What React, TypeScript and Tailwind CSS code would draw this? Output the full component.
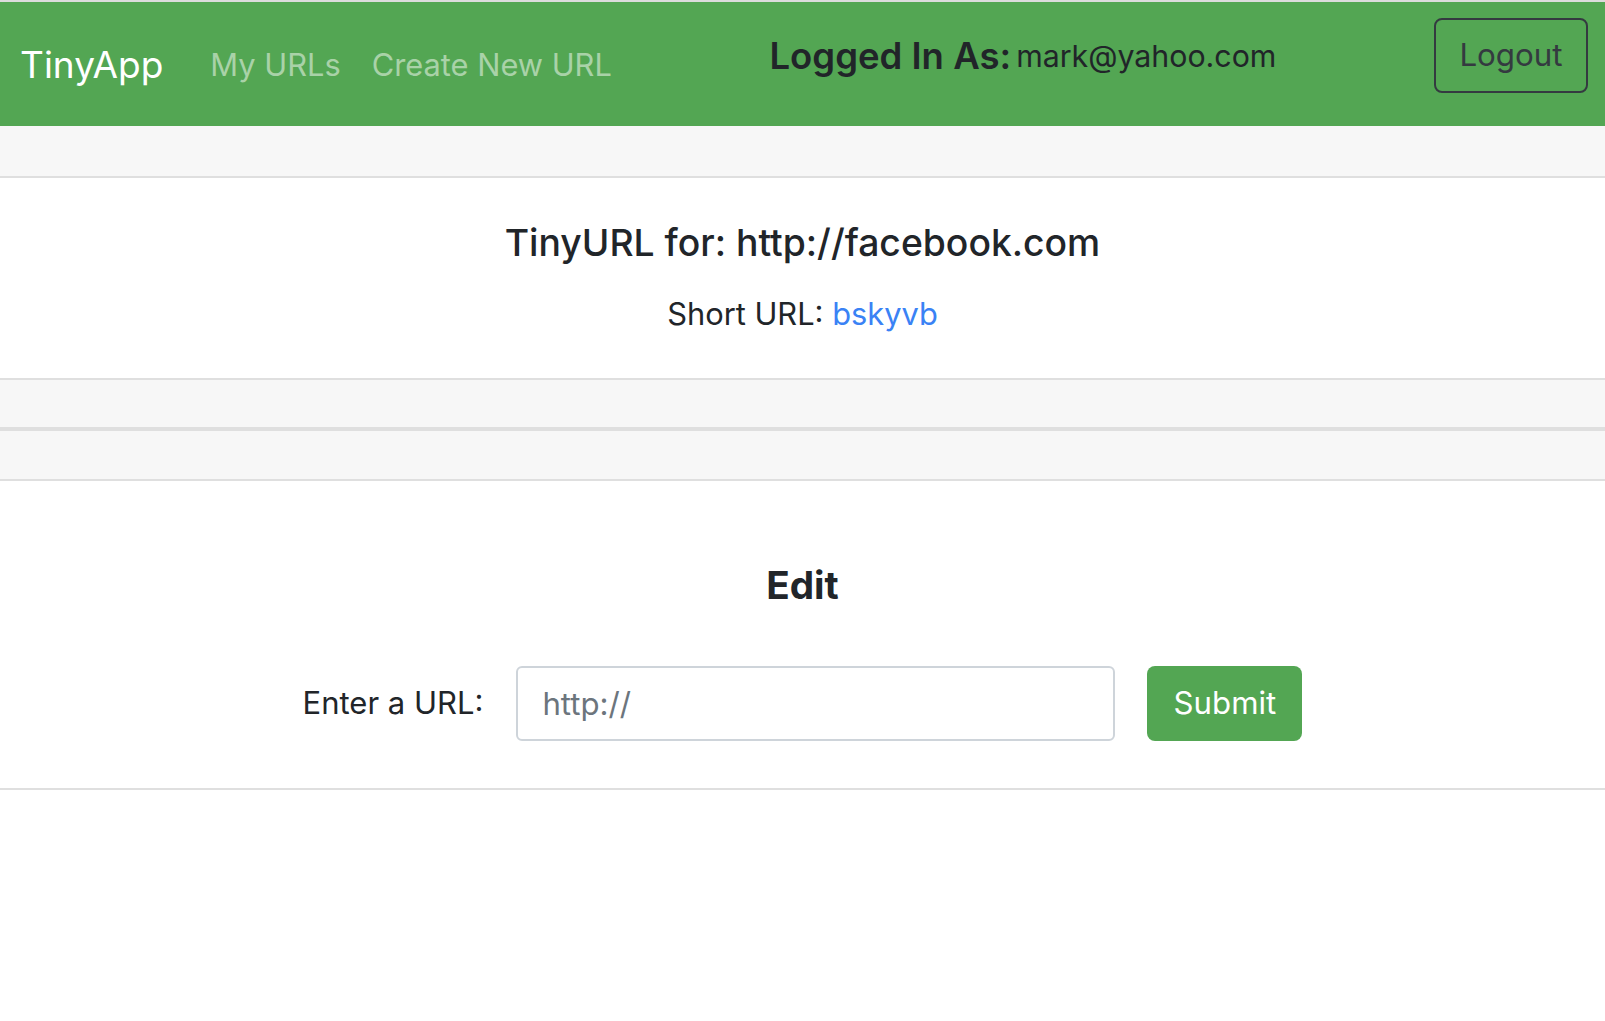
import React from "react";

export default function App() {
  return (
    <div className="min-h-screen bg-white" style={{ fontFamily: "Inter, 'Liberation Sans', sans-serif" }}>
      <nav className="flex h-[126px] items-center border-t-2 border-[#dcdcdc] bg-[#53a653] pl-[20px] pr-[17px]">
        <span className="text-[37px] leading-none text-white">TinyApp</span>
        <div className="ml-[47px] flex items-center gap-[31px] pt-[2px]">
          <span className="text-[30.8px] leading-none text-[#a9d2a8]">My URLs</span>
          <span className="text-[30.8px] leading-none text-[#a9d2a8]">Create New URL</span>
        </div>
        <div className="mt-[16px] flex h-[75px] flex-1 items-center justify-center self-start pt-[2px]">
          <span className="text-[36.5px] font-semibold text-[#212529]">Logged In As:</span>
          <span className="ml-[5px] text-[30.3px] text-[#212529]">mark@yahoo.com</span>
        </div>
        <button className="mt-[16px] flex h-[75px] w-[154px] items-center justify-center self-start rounded-[8px] border-2 border-[#343a40] text-[31.3px] text-[#343a40]">
          Logout
        </button>
      </nav>

      <section>
        <div className="h-[52px] border-b-2 border-[#dfdfdf] bg-[#f7f7f7]" />
        <div className="flex h-[200px] flex-col items-center pt-[41px]">
          <h1 className="text-[37.3px] font-medium leading-[48px] text-[#212529]">TinyURL for: http://facebook.com</h1>
          <p className="mt-[24px] text-[30.8px] leading-[45px] text-[#212529]">
            Short URL: <a className="text-[#3a82f5]">bskyvb</a>
          </p>
        </div>
        <div className="h-[51px] border-y-2 border-[#dfdfdf] bg-[#f7f7f7]" />
      </section>

      <section className="border-t-2 border-[#dfdfdf]">
        <div className="h-[50px] border-b-2 border-[#dfdfdf] bg-[#f7f7f7]" />
        <div className="flex h-[309px] flex-col items-center border-b-2 border-[#dfdfdf] pt-[81px]">
          <h2 className="text-[38.7px] font-bold leading-[46px] text-[#212529]">Edit</h2>
          <form className="mt-[58px] flex items-center">
            <label className="text-[31px] text-[#212529]">Enter a URL:</label>
            <input
              className="ml-[33px] h-[75px] w-[599px] rounded-[6px] border-2 border-[#ced4da] px-[24px] text-[31.2px] text-[#495057] outline-none placeholder:text-[#6c757d]"
              placeholder="http://"
            />
            <button
              type="button"
              className="ml-[32px] flex h-[75px] w-[155px] items-center justify-center rounded-[8px] bg-[#53a653] text-[31.2px] text-white"
            >
              Submit
            </button>
          </form>
        </div>
      </section>
    </div>
  );
}
